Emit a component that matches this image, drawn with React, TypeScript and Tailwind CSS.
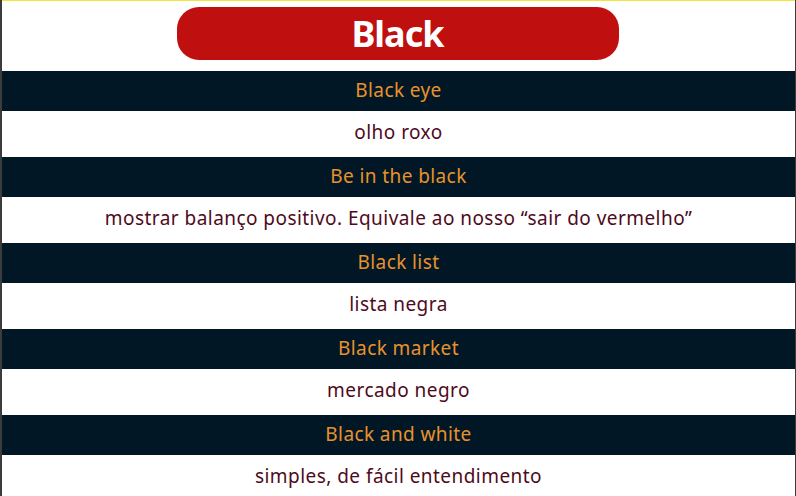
import React from "react";

const rows: [string, string][] = [
  ["Black eye", "olho roxo"],
  ["Be in the black", "mostrar balanço positivo. Equivale ao nosso “sair do vermelho”"],
  ["Black list", "lista negra"],
  ["Black market", "mercado negro"],
  ["Black and white", "simples, de fácil entendimento"],
];

export default function App() {
  return (
    <div className="w-[796px] h-[496px] overflow-hidden bg-white flex">
      <div className="w-[2px] h-full shrink-0 bg-[#3c3c3c]" />
      <div className="flex-1 flex flex-col">
        <div className="h-[1px] shrink-0 bg-[#f7e43a]" />
        <div className="h-[70px] shrink-0 flex justify-center pt-[6px]">
          <div className="w-[442px] h-[53px] ml-[-2px] rounded-[22px] bg-[#c00f0f] flex items-center justify-center">
            <span
              className="text-white font-bold text-[36px] leading-none tracking-[-1px]"
              style={{ fontFamily: '"Noto Sans", "Open Sans", sans-serif' }}
            >
              Black
            </span>
          </div>
        </div>
        {rows.map(([en, pt]) => (
          <React.Fragment key={en}>
            <div
              className="h-[40px] shrink-0 bg-[#021726] flex items-center justify-center pb-[2px] text-[#e8922c] text-[19px] tracking-[0.4px]"
              style={{ fontFamily: '"Noto Sans", sans-serif' }}
            >
              {en}
            </div>
            <div
              className="h-[46px] shrink-0 flex items-center justify-center pb-[3px] text-[#4e0a1c] text-[19px] tracking-[0.45px]"
              style={{ fontFamily: '"Noto Sans", sans-serif' }}
            >
              {pt}
            </div>
          </React.Fragment>
        ))}
      </div>
      <div className="w-[1px] h-full shrink-0 bg-[#3c3c3c]" />
    </div>
  );
}
